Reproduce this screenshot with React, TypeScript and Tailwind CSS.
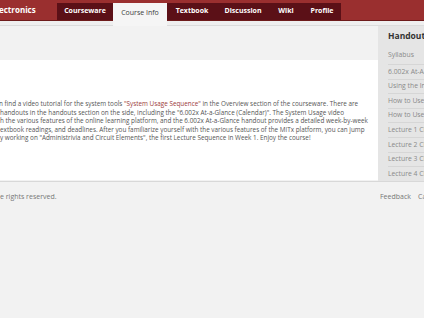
import React from 'react';

// 課程資訊頁（已橫向捲動的截圖狀態）
const tabs = [
    { label: 'Courseware', w: 'w-[56px]' },
    { label: 'Course Info', w: 'w-[54px]', active: true },
    { label: 'Textbook', w: 'w-[50px]' },
    { label: 'Discussion', w: 'w-[52px]' },
    { label: 'Wiki', w: 'w-[34px]' },
    { label: 'Profile', w: 'w-[38px]' },
];

const handouts = [
    '6.002x At-A-Glance (Calendar)',
    'Using the Interactive Tools',
    'How to Use the Circuit Sandbox',
    'How to Use the Text Book',
    'Lecture 1 Class Notes',
    'Lecture 2 Class Notes',
    'Lecture 3 Class Notes',
    'Lecture 4 Class Notes',
];

const App: React.FC = () => {
    return (
        <div className="min-h-[318px] w-[424px] overflow-hidden bg-[#f2f2f2] font-['Open_Sans',sans-serif]">
            {/* header */}
            <header className="flex h-[21px] items-end border-b border-[#6e1b1b] bg-[#9a2f2f]">
                <div className="flex h-full w-[58px] items-center whitespace-nowrap text-[8px] font-bold text-white -ml-[1px] pb-[1px]">
                    ectronics
                </div>
                <nav className="flex h-[17px] bg-[#5b1017]">
                    {tabs.map((tab) => (
                        <div
                            key={tab.label}
                            className={
                                tab.active
                                    ? `${tab.w} -mb-[6px] flex h-[23px] items-start justify-center whitespace-nowrap bg-[#f5f5f5] pt-[5px] text-[7px] text-[#3c3c3c]`
                                    : `${tab.w} flex h-full items-center justify-center whitespace-nowrap text-[7px] font-bold text-white`
                            }
                        >
                            {tab.label}
                        </div>
                    ))}
                </nav>
            </header>
            <div className="h-[5px] border-b border-[#dcdcdc] bg-[#efefef]" />

            <div className="flex">
                <main className="w-[378px] shrink-0">
                    <div className="h-[34px]" />
                    <div className="h-[120px] bg-white pt-[40px] text-[6.35px] leading-[8.5px] text-[#555]">
                        <p className="whitespace-nowrap -ml-[1px]">
                            n find a video tutorial for the system tools <span className="text-[#9b3b3b]">"System Usage Sequence"</span> in the Overview section of the courseware. There are
                        </p>
                        <p className="whitespace-nowrap">handouts in the handouts section on the side, including the "6.002x At-a-Glance (Calendar)". The System Usage video</p>
                        <p className="whitespace-nowrap">h the various features of the online learning platform, and the 6.002x At-a-Glance handout provides a detailed week-by-week</p>
                        <p className="whitespace-nowrap">extbook readings, and deadlines. After you familiarize yourself with the various features of the MITx platform, you can jump</p>
                        <p className="whitespace-nowrap">y working on "Administrivia and Circuit Elements", the first Lecture Sequence in Week 1. Enjoy the course!</p>
                    </div>
                </main>

                <aside className="w-[200px] shrink-0 bg-[#e5e5e5] pl-[10px] text-[6.8px] text-[#8a8a8a]">
                    <div className="flex h-[21px] items-center whitespace-nowrap text-[8.5px] font-bold text-[#333]">
                        Handouts
                    </div>
                    <div className="flex h-[17px] items-center whitespace-nowrap">Syllabus</div>
                    {handouts.map((item) => (
                        <div
                            key={item}
                            className="flex h-[14.6px] items-center whitespace-nowrap border-t border-[#d6d6d6]"
                        >
                            {item}
                        </div>
                    ))}
                </aside>
            </div>

            <footer className="flex border-t border-[#d8d8d8] pt-[10px] text-[7px] text-[#777]">
                <div className="w-[380px] shrink-0 whitespace-nowrap">e rights reserved.</div>
                <div className="shrink-0 whitespace-nowrap">Feedback</div>
                <div className="ml-[7px] shrink-0 whitespace-nowrap">Careers</div>
            </footer>
        </div>
    );
};

export default App;
